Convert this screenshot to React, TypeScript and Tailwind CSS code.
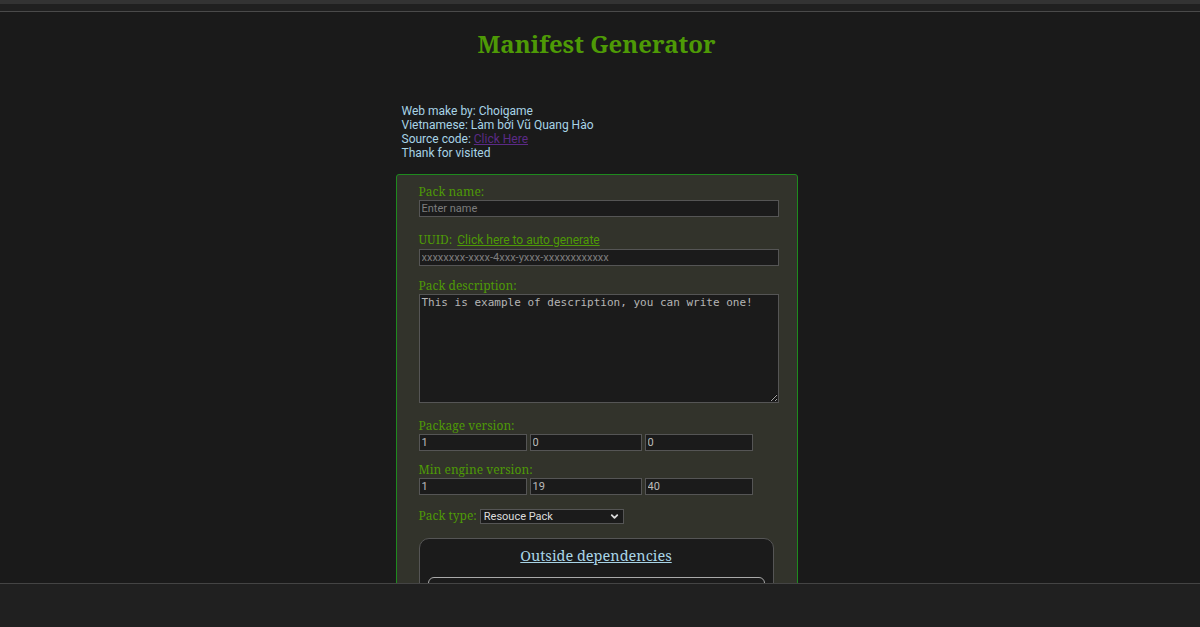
import { ChevronDown } from "lucide-react";

const serif = "font-['Noto_Serif','DejaVu_Serif',serif]";
const sans = "font-['Roboto','Liberation_Sans',sans-serif]";

const Label = ({ text, className = "" }: { text: string; className?: string }) => (
  <label className={`block text-[12px] leading-[16px] text-[#4e9a06] ${serif} ${className}`}>{text}</label>
);

const Field = ({ value, placeholder, w }: { value?: string; placeholder?: string; w: string }) => (
  <input
    readOnly
    defaultValue={value}
    placeholder={placeholder}
    className={`block ${w} h-[17px] border border-[#555] bg-[#1b1b1b] px-[2px] text-[11px] leading-[15px] text-[#bbb] placeholder:text-[#7d7d7d] outline-none ${sans}`}
  />
);

const App = () => {
  return (
    <div className="min-h-[627px] bg-[#1a1a1a]">
      <div className="h-[4px] bg-[#333]" />
      <div className="h-[8px] bg-[#202020] border-b border-[#4a4a4a]" />

      <main className="flex flex-col items-center pr-[7px]">
        <h1 className={`mt-[16px] text-[24px] leading-[32px] font-bold text-[#4e9a06] ${serif}`}>
          Manifest Generator
        </h1>

        <div className={`mt-[44px] w-[402px] pl-[6px] text-[12px] leading-[14px] text-[#a8d4e6] ${sans}`}>
          <p>Web make by: Choigame</p>
          <p>Vietnamese: Làm bởi Vũ Quang Hào</p>
          <p>
            Source code: <a href="#" className="underline text-[#5b2a86]">Click Here</a>
          </p>
          <p>Thank for visited</p>
        </div>

        <div className="mt-[14px] w-[402px] rounded-[3px] border border-[#1e8a1e] bg-[#32332b] pl-[22px] pr-[18px] pt-[9px] pb-[40px]">
          <Label text="Pack name:" />
          <Field placeholder="Enter name" w="w-[360px]" />

          <div className="mt-[15px] flex items-baseline gap-[5px]">
            <Label text="UUID:" />
            <a href="#" className={`text-[12px] leading-[16px] underline text-[#4e9a06] ${sans}`}>
              Click here to auto generate
            </a>
          </div>
          <div className="mt-[1px]">
            <Field placeholder="xxxxxxxx-xxxx-4xxx-yxxx-xxxxxxxxxxxx" w="w-[360px]" />
          </div>

          <Label text="Pack description:" className="mt-[12px]" />
          <textarea
            readOnly
            defaultValue="This is example of description, you can write one!"
            className="block w-[360px] h-[109px] resize border border-[#555] bg-[#1b1b1b] px-[2px] py-[1px] text-[11px] leading-[14px] text-[#b5b5b5] outline-none font-['DejaVu_Sans_Mono',monospace]"
          />

          <Label text="Package version:" className="mt-[15px]" />
          <div className="flex gap-[3px]">
            <Field value="1" w="w-[108px]" />
            <Field value="0" w="w-[112px]" />
            <Field value="0" w="w-[108px]" />
          </div>

          <Label text="Min engine version:" className="mt-[11px]" />
          <div className="flex gap-[3px]">
            <Field value="1" w="w-[108px]" />
            <Field value="19" w="w-[112px]" />
            <Field value="40" w="w-[108px]" />
          </div>

          <div className="mt-[13px] flex items-center gap-[3px]">
            <Label text="Pack type:" />
            <div className="relative flex">
              <select
                defaultValue="res"
                className={`block appearance-none w-[144px] h-[15px] border border-[#555] bg-[#1b1b1b] pl-[3px] py-0 text-[11px] leading-[13px] text-[#ddd] outline-none ${sans}`}
              >
                <option value="res">Resouce Pack</option>
                <option value="beh">Behavior Pack</option>
              </select>
              <ChevronDown className="pointer-events-none absolute right-[4px] top-[2px] w-[11px] h-[11px] text-[#ddd]" strokeWidth={4} />
            </div>
          </div>

          <div className="mt-[14px] w-[355px] rounded-[10px] border border-[#555] bg-[#1b1b1b] pt-[6px] px-[8px] pb-[20px]">
            <h3 className={`text-center text-[14.5px] leading-[20px] underline text-[#a8d4e6] ${serif}`}>
              Outside dependencies
            </h3>
            <div className="mt-[12px] h-[80px] rounded-[6px] border border-[#aaa]" />
          </div>
        </div>
      </main>

      <div className="fixed bottom-0 left-0 right-0 h-[44px] border-t border-[#444] bg-[#202020]" />
    </div>
  );
};

export default App;
